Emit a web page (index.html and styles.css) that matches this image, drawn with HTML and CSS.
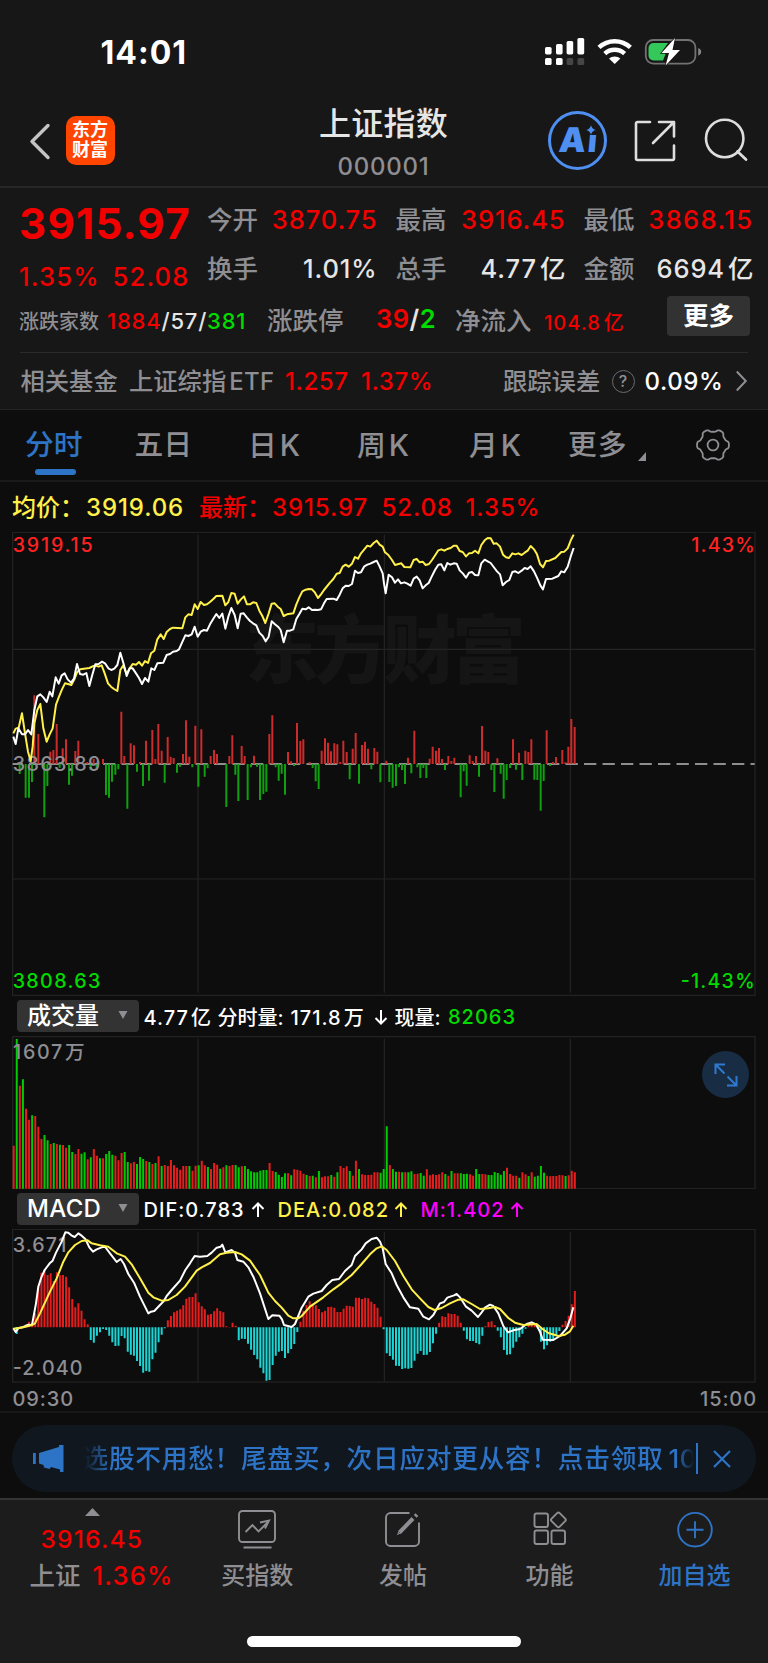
FILE: index.html
```html
<!DOCTYPE html>
<html lang="zh-CN">
<head>
<meta charset="utf-8">
<title>上证指数 000001</title>
<link rel="stylesheet" href="styles.css">
</head>
<body>
<div class="app">
  <div class="statusbar">
    <div class="clock">14:01</div>
    <svg class="status-icons" width="160" height="32" viewBox="0 0 160 32">
      <g fill="#fff">
        <rect x="1" y="13" width="6.6" height="7.4" rx="1.6"/><rect x="12" y="10" width="6.6" height="10.4" rx="1.6"/><rect x="22.6" y="7" width="6.6" height="13.4" rx="1.6"/><rect x="33.4" y="4" width="6.8" height="16.4" rx="1.6"/>
        <rect x="1" y="24" width="6.6" height="7" rx="1.6"/><rect x="12" y="24" width="6.6" height="7" rx="1.6"/>
      </g>
      <g fill="#464646"><rect x="22.6" y="24" width="6.6" height="7" rx="1.6"/><rect x="33.4" y="24" width="6.8" height="7" rx="1.6"/></g>
      <g fill="none" stroke="#fff" stroke-width="4.4"><path d="M55 13.4a23 23 0 0 1 31.4 0"/><path d="M60.8 19.6a14.6 14.6 0 0 1 19.8 0"/></g>
      <path d="M65 24.6a8.6 8.6 0 0 1 11.4 0L70.7 30z" fill="#fff"/>
      <rect x="101.800" y="6" width="49.600" height="23.600" rx="7.500" fill="none" stroke="#727272" stroke-width="1.800"/>
      <path d="M154.200 14c4 1.200 4 6.500 0 7.600z" fill="#858585"/>
      <path d="M109.500 9H124l-6 8.500h4.500L119 26.500h-9.500a5 5 0 0 1-5-5V14a5 5 0 0 1 5-5z" fill="#34c759"/>
      <path d="M131 4 117.500 19h7.500l-3.400 12.500L136 16h-7.500z" fill="#fff" stroke="#171717" stroke-width="1.500" paint-order="stroke"/>
    </svg>
  </div>

  <header class="header">
    <svg class="back" width="24" height="40" viewBox="0 0 24 40"><path d="M20 4.500 4 20.500l16 16" fill="none" stroke="#c4c4c4" stroke-width="3.400" stroke-linecap="round" stroke-linejoin="round"/></svg>
    <div class="logo"><span>东方</span><span>财富</span></div>
    <div class="title"><h1>上证指数</h1><p>000001</p></div>
    <div class="ai"><span class="ai-text">A<i>ı</i></span>
      <svg class="spark" width="10" height="10" viewBox="0 0 10 10"><path d="M5 0q.8 4.200 5 5-4.200.8-5 5-.8-4.200-5-5 4.200-.8 5-5z" fill="#4f8ff2"/></svg>
    </div>
    <svg class="share" width="44" height="44" viewBox="0 0 44 44"><path d="M17 3H4.500A1.500 1.500 0 0 0 3 4.500v35A1.500 1.500 0 0 0 4.500 41h35a1.500 1.500 0 0 0 1.500-1.500V26.500M26 3h15v14.500M40.500 3.500 20 24" fill="none" stroke="#dedede" stroke-width="2.600" stroke-linecap="round" stroke-linejoin="round"/></svg>
    <svg class="search" width="46" height="46" viewBox="0 0 46 46"><circle cx="21.700" cy="20.500" r="18.700" fill="none" stroke="#dedede" stroke-width="2.600"/><path d="m34.500 33.500 8.500 8" stroke="#dedede" stroke-width="2.800" stroke-linecap="round"/></svg>
  </header>

  <section class="quote">
    <div class="quote-top">
      <div class="price">
        <div class="last">3915.97</div>
        <div class="delta"><span>1.35%</span><span>52.08</span></div>
      </div>
      <div class="stats">
        <div class="stats-row">
          <span class="label">今开</span><span class="value up">3870.75</span>
          <span class="label">最高</span><span class="value up">3916.45</span>
          <span class="label">最低</span><span class="value up">3868.15</span>
        </div>
        <div class="stats-row">
          <span class="label">换手</span><span class="value">1.01%</span>
          <span class="label">总手</span><span class="value">4.77<b>亿</b></span>
          <span class="label">金额</span><span class="value">6694<b>亿</b></span>
        </div>
      </div>
    </div>
    <div class="breadth">
      <span class="label small">涨跌家数</span>
      <span class="counts"><em class="up">1884</em>/57/<em class="down">381</em></span>
      <span class="label">涨跌停</span>
      <span class="limits"><em class="up">39</em>/<em class="down">2</em></span>
      <span class="label">净流入</span>
      <span class="inflow up">104.8<b>亿</b></span>
      <button class="more">更多</button>
    </div>
    <div class="fund">
      <span class="cjk">相关基金</span>
      <span class="cjk">上证综指<b>ETF</b></span>
      <span class="num up">1.257</span>
      <span class="num up">1.37%</span>
      <span class="cjk">跟踪误差</span>
      <i class="help">?</i>
      <span class="num white">0.09%</span>
      <svg width="14" height="24" viewBox="0 0 14 24"><path d="m.8 2.500 9 9.500-9 9.500" fill="none" stroke="#8e8e93" stroke-width="2"/></svg>
    </div>
  </section>

  <nav class="tabs">
    <a class="active">分时</a><a>五日</a><a>日<b>K</b></a><a>周<b>K</b></a><a>月<b>K</b></a><a class="tab-more">更多<svg class="corner" width="8" height="9" viewBox="0 0 8 9"><path d="M8 0v9H0z" fill="#8e8e93"/></svg></a>
    <svg class="gear" width="34" height="34" viewBox="-17 -17 34 34" fill="none" stroke="#8e8e93" stroke-width="1.800"><path id="gear"/><circle r="5.400"/></svg>
  </nav>

  <div class="legend">
    <span class="avg">均价：</span><span class="num avg">3919.06</span><span class="up">最新：</span><span class="num up">3915.97</span><span class="num up">52.08</span><span class="num up">1.35%</span>
  </div>

  <svg class="chart" width="768" height="464" viewBox="0 396 2304 1392">
    <text class="watermark" x="735" y="831" textLength="842">东方财富</text>
    <g class="grid"><rect x="38" y="397" width="2227" height="1389"/><path d="M594 404V1778M1153 404V1778M1711 404V1778M38 748H2264M38 1437H2264"/></g>
    <path d="M38 1092H2264" stroke="#8e8e8e" stroke-width="6" stroke-dasharray="37 18.500" stroke-dashoffset="6.500"/>
    <path class="rise-soft" id="diff-up"/><path class="fall-soft" id="diff-down"/>
    <text class="axis" x="38" y="1112" textLength="263">3863.89</text>
    <polyline id="avg-line" class="line yellow" points="40,1000 47,986 56,983 66,940 75,1000 84,1055 92,1083 98,1040 103,970 112,930 121,912 130,985 140,1025 149,1003 158,985 168,914 177,890 186,868 195,850 204,852 214,855 223,838 232,815 241,808 268,804 278,799 287,797 296,800 305,796 314,820 324,850 333,860 342,867 352,873 361,810 370,796 380,822 389,805 398,792 408,794 417,786 426,797 435,783 444,789 453,760 463,752 472,718 482,703 491,717 500,696 510,687 519,683 547,685 556,652 565,643 575,645 584,613 593,627 602,606 612,615 621,613 630,606 640,597 649,588 667,587 676,616 685,606 694,579 704,581 713,611 722,599 732,589 741,613 750,613 759,607 769,609 778,632 787,648 796,669 806,640 815,611 824,610 833,620 842,627 851,648 861,643 880,640 889,613 898,592 907,574 917,569 926,567 936,568 945,578 954,594 963,583 972,570 990,548 1000,537 1010,521 1019,519 1028,500 1037,494 1046,500 1056,491 1065,471 1074,476 1083,460 1093,448 1102,437 1111,440 1121,429 1130,422 1139,434 1148,440 1155,457 1165,465 1176,480 1185,495 1204,490 1213,501 1231,502 1241,480 1250,477 1259,487 1268,485 1277,495 1287,492 1296,480 1306,465 1315,451 1324,448 1333,452 1342,447 1352,444 1361,437 1370,437 1379,453 1388,456 1398,469 1407,460 1416,459 1425,452 1435,460 1444,435 1454,421 1463,414 1472,415 1481,431 1490,430 1500,440 1509,464 1518,472 1527,474 1537,460 1546,463 1555,460 1565,465 1574,458 1583,452 1592,438 1602,448 1611,463 1620,492 1629,502 1638,483 1648,482 1666,474 1684,456 1693,455 1703,445 1712,422 1721,404"/>
    <polyline id="price-line" class="line white" points="40,1010 47,1032 55,985 66,1003 75,1003 84,990 94,1003 103,930 112,889 121,883 130,892 140,906 149,875 157,889 167,832 176,851 185,826 194,820 203,838 213,848 222,836 231,792 240,822 250,824 259,819 268,858 277,824 286,793 296,792 306,785 316,791 325,805 334,810 343,806 352,795 361,758 371,792 380,828 389,805 398,805 408,820 417,834 426,852 435,834 445,845 454,805 463,810 472,790 490,788 500,765 510,762 519,755 530,753 537,748 546,728 556,706 565,708 575,703 584,680 593,710 602,695 612,690 621,692 630,673 640,656 649,642 658,654 667,641 676,686 685,650 694,624 704,645 713,685 722,641 731,640 741,653 750,663 759,670 769,676 778,698 788,708 797,724 806,710 815,664 824,672 834,680 842,690 851,727 861,692 870,692 880,688 889,657 898,642 907,626 917,628 926,622 936,630 945,629 954,630 963,628 972,610 980,597 1000,596 1010,600 1019,584 1028,565 1037,557 1046,558 1056,552 1065,512 1074,519 1083,517 1093,499 1102,494 1111,491 1121,486 1130,482 1139,500 1148,520 1152,550 1157,580 1166,524 1176,532 1185,548 1194,538 1203,550 1213,547 1222,551 1232,557 1241,536 1250,530 1259,541 1268,565 1277,556 1286,549 1295,530 1305,510 1315,494 1324,493 1333,511 1342,489 1351,494 1361,490 1370,491 1379,511 1389,521 1398,533 1407,518 1416,516 1425,525 1435,526 1444,490 1454,479 1463,484 1472,489 1481,501 1491,514 1500,523 1508,556 1518,546 1528,540 1537,516 1546,514 1555,519 1565,512 1574,504 1583,507 1592,499 1602,514 1612,535 1621,556 1629,568 1638,537 1657,536 1675,528 1684,514 1693,517 1703,500 1712,470 1721,444"/>
    <text class="axis rise" x="38" y="457" textLength="240">3919.15</text>
    <text class="axis rise" x="2074" y="457" textLength="190">1.43%</text>
    <text class="axis fall" x="38" y="1765" textLength="263">3808.63</text>
    <text class="axis fall" x="2042" y="1765" textLength="222">-1.43%</text>
  </svg>

  <div class="indicator volume-bar">
    <button class="picker">成交量<svg width="10" height="8" viewBox="0 0 10 8"><path d="M.5 0h9L5 8z" fill="#8e8e93"/></svg></button>
    <span class="num">4.77<b>亿</b></span><span>分时量:</span><span class="num">171.8<b>万</b></span><svg class="arrow" width="14" height="16" viewBox="0 0 14 16"><path d="M7 1v13.500M1.500 9 7 14.500 12.500 9"/></svg><span>现量:</span><span class="num down">82063</span>
  </div>
  <div class="chart-wrap">
    <svg class="chart" width="768" height="153" viewBox="0 168 2304 459">
      <g class="grid"><rect x="38" y="170" width="2227" height="456"/><path d="M594 176V626M1153 176V626M1711 176V626"/></g>
      <path class="rise" id="vol-up"/><path class="fall" id="vol-down"/>
      <text class="axis" x="39" y="236" textLength="148">1607</text><text class="axis" x="195" y="236">万</text>
    </svg>
    <button class="expand"><svg width="24" height="24" viewBox="0 0 24 24" fill="none" stroke="#2e7ad0" stroke-width="2"><path d="M11 1.500H1.500V11M1.500 1.500 10.500 10.500M13 22.500h9.500V13M22.500 22.500 13.500 13.500"/></svg></button>
  </div>

  <div class="indicator macd-bar">
    <button class="picker">MACD<svg width="10" height="8" viewBox="0 0 10 8"><path d="M.5 0h9L5 8z" fill="#8e8e93"/></svg></button>
    <span class="num">DIF:0.783</span><svg class="arrow" width="14" height="16" viewBox="0 0 14 16"><path d="M7 15V1.500M1.500 7 7 1.500 12.500 7"/></svg>
    <span class="num avg">DEA:0.082</span><svg class="arrow avg" width="14" height="16" viewBox="0 0 14 16"><path d="M7 15V1.500M1.500 7 7 1.500 12.500 7"/></svg>
    <span class="num magenta">M:1.402</span><svg class="arrow magenta" width="14" height="16" viewBox="0 0 14 16"><path d="M7 15V1.500M1.500 7 7 1.500 12.500 7"/></svg>
  </div>
  <svg class="chart" width="768" height="154" viewBox="0 117 2304 462">
    <g class="grid"><rect x="38" y="118" width="2227" height="458"/><path d="M594 125V574M1153 125V574M1711 125V574"/></g>
    <text class="axis" x="38" y="185" textLength="161">3.671</text>
    <text class="axis" x="38" y="554" textLength="209">-2.040</text>
    <path class="rise" id="macd-up"/><path class="aqua" id="macd-down"/>
    <polyline class="line white" points="40,415 47,426 55,415 70,411 85,404 96,405 108,340 115,290 124,262 134,240 149,220 158,212 168,188 185,155 196,127 205,128 214,136 224,141 235,130 245,137 256,147 268,172 279,185 290,178 305,172 315,170 330,190 350,216 362,207 372,222 385,252 403,280 420,320 445,370 453,365 463,363 480,345 490,335 500,318 515,300 540,272 556,240 570,220 584,198 600,200 622,198 635,188 650,173 662,170 667,164 676,187 695,180 705,188 712,210 730,215 745,232 760,260 780,310 805,387 817,376 838,377 846,388 852,405 875,411 885,402 905,353 925,320 940,311 965,303 980,285 997,270 1017,267 1035,243 1055,225 1065,198 1085,178 1097,160 1115,147 1130,143 1140,155 1148,175 1157,222 1175,250 1190,285 1210,322 1230,352 1255,356 1270,380 1287,388 1300,375 1320,340 1332,336 1342,323 1362,316 1370,312 1380,322 1398,350 1415,362 1434,381 1445,367 1455,353 1470,344 1480,348 1495,370 1510,408 1524,427 1540,421 1560,417 1580,402 1595,397 1608,403 1620,425 1628,449 1660,450 1680,438 1700,415 1711,385 1720,352"/>
    <polyline class="line yellow" points="40,416 70,412 97,405 105,400 120,370 150,305 170,265 190,215 205,187 225,165 245,153 263,151 275,160 300,166 325,170 350,190 375,200 395,223 420,265 445,308 460,322 485,332 505,330 530,315 555,290 590,242 605,232 630,219 660,193 680,188 705,186 725,193 750,212 780,255 805,308 825,333 845,353 865,377 880,385 895,385 905,378 930,350 970,322 1000,298 1025,280 1055,255 1085,222 1110,193 1130,175 1145,169 1160,180 1185,213 1210,258 1235,298 1260,325 1285,351 1303,360 1325,354 1350,340 1375,329 1390,328 1415,342 1440,357 1465,355 1485,351 1500,357 1525,384 1545,398 1570,405 1610,402 1625,415 1645,429 1675,438 1695,434 1710,424 1720,407"/>
  </svg>
  <div class="times"><span>09:30</span><span>15:00</span></div>

  <div class="promo-area">
    <div class="promo">
      <svg class="horn" width="32" height="28" viewBox="0 0 32 28" fill="#2e74c6"><path d="M0 8h2.800v11H0zM6 8 26 2V0h4.500v27H27v-2.500l-9-2.500-1.500 2-5.500-1.500-.5-2.500L6 18.500z"/></svg>
      <div class="promo-text">选股不用愁！尾盘买，次日应对更从容！点击领取<b>10</b></div>
      <i class="divider"></i>
      <svg class="close" width="18" height="18" viewBox="0 0 18 18"><path d="m1 1 16 16M17 1 1 17" stroke="#2e74c6" stroke-width="2.200"/></svg>
    </div>
  </div>

  <footer class="bottom">
    <div class="bottom-nav">
      <div class="mini">
        <svg width="15" height="8" viewBox="0 0 15 8"><path d="M7.500 0 15 8H0z" fill="#8e8e93"/></svg>
        <div class="mini-price">3916.45</div>
        <div class="mini-row"><span>上证</span><em>1.36%</em></div>
      </div>
      <a><svg width="40" height="40" viewBox="0 0 40 40"><rect x="2" y="2" width="36" height="31" rx="3.500"/><path d="M6.500 38.500h28M8.500 23 15.500 16l6 6.500 9.500-9.500M23 13.500l9-2-4 8"/></svg>买指数</a>
      <a><svg width="40" height="40" viewBox="0 0 40 40"><path d="M26.500 4H7.500A4.500 4.500 0 0 0 3 8.500v24A4.500 4.500 0 0 0 7.500 37h24a4.500 4.500 0 0 0 4.500-4.500V13.500"/><path d="M32.200 7.300l1.700-1.700M30 9.500 16.500 23.500" stroke-width="4"/><path d="m14.500 25.500 2-4 2 2z" stroke-width="1"/></svg>发帖</a>
      <a class="features"><svg width="40" height="40" viewBox="0 0 40 40"><rect x="4.500" y="4.500" width="13.500" height="13.500" rx="2"/><rect x="4.500" y="21.500" width="13.500" height="13.500" rx="2"/><rect x="21.500" y="21.500" width="13.500" height="13.500" rx="2"/><rect x="22.700" y="5.200" width="11.400" height="11.400" rx="1.800" transform="rotate(45 28.400 10.900)"/></svg>功能</a>
      <a class="add"><svg width="40" height="40" viewBox="0 0 40 40"><circle cx="20" cy="20.700" r="16.800"/><path d="M11.500 20.700h17M20 12.200v17"/></svg>加自选</a>
    </div>
    <div class="home"></div>
  </footer>
</div>
<script src="charts.js"></script>
</body>
</html>
```
FILE: styles.css
```css
* { box-sizing: border-box; }
body { margin: 0; background: #0d0d0d; color: #e6e6e6; font-family: Inter, "Noto Sans CJK SC", sans-serif; font-weight: 500; }
h1, p { margin: 0; font-weight: 500; }
em, i { font-style: normal; }
b { font-weight: inherit; }
button { border: 0; padding: 0; font: inherit; color: inherit; }
svg { display: block; flex: none; }
span, a, div { white-space: nowrap; }
.app { width: 768px; height: 1663px; overflow: hidden; }
.up { color: #f20000; }
.down { color: #00dc00; }
.white { color: #fff; }
.avg { color: #fff04a; }
.magenta { color: #ff00ff; }

.statusbar { height: 96px; background: #171717; display: flex; justify-content: space-between; padding: 34px 64px 0 100.500px; }
.clock { font-size: 32px; line-height: 37px; font-weight: 700; color: #fff; letter-spacing: 1px; }

.header { height: 92px; background: #171717; border-bottom: 2px solid #272727; display: grid; grid-template-columns: 65.500px 49px 178.500px 182px 73px 85px 69.500px 1fr; }
.back { margin: 24.500px 0 0 28px; }
.logo { grid-column: 2; margin-top: 19.500px; width: 49px; height: 49px; border-radius: 10px; background: #ff4500; display: flex; flex-direction: column; align-items: center; justify-content: center; font-size: 18px; line-height: 20px; font-weight: 700; color: #fff; }
.title { grid-column: 4; text-align: center; margin-left: -1px; }
.title h1 { font-size: 32px; line-height: 40px; margin-top: 7.500px; color: #e6e6e6; letter-spacing: .2px; }
.title p { font-size: 24px; line-height: 30px; margin-top: 8px; color: #8e8e93; letter-spacing: .8px; }
.ai { grid-column: 6; margin: 15px 0 0 0; width: 59px; height: 59px; border: 3px solid #4f8ff2; border-radius: 50%; color: #4f8ff2; position: relative; }
.ai-text { position: absolute; left: 8px; top: 8px; font-size: 34px; line-height: 36px; font-weight: 900; letter-spacing: -1px; transform: skewX(-5deg); }
.ai-text i { margin-left: 3px; font-size: 31px; }
.spark { position: absolute; left: 34.500px; top: 11px; }
.share { grid-column: 7; margin: 23px 0 0 0; }
.search { grid-column: 8; margin: 22px 0 0 .5px; }

.quote { height: 222px; background: #171717; border-bottom: 1px solid #242424; }
.quote-top { display: flex; height: 108px; }
.price { width: 207px; padding-left: 19px; color: #f20000; }
.last { font-size: 42px; line-height: 50px; margin-top: 10.500px; font-weight: 700; letter-spacing: 1.300px; }
.delta { display: grid; grid-template-columns: 93.500px 80px; font-size: 25.500px; line-height: 32px; margin-top: 12px; font-weight: 500; letter-spacing: 1.200px; }
.stats { margin-top: 6.500px; font-size: 25.500px; line-height: 49px; font-weight: 550; }
.stats-row { display: grid; grid-template-columns: 50px 120.500px 68px 120px 68px 120px; }
.stats-row .label:nth-child(n+2) { padding-left: 18px; }
.stats-row .value { text-align: right; letter-spacing: .9px; }
.stats-row:first-child .value:last-child { letter-spacing: 1.400px; }
.stats b, .inflow b { margin-left: 3px; letter-spacing: 0; font-weight: 500; }
.label { color: #8e8e93; font-weight: 500; font-size: 25.500px; }
.breadth { display: grid; grid-template-columns: 88px 160px 108px 80px 89px 123px 83px; padding: 0 0 12px 19px; height: 56px; align-items: center; }
.small { font-size: 20px; padding-top: 5px; }
.counts { font-size: 22px; font-weight: 550; padding-top: 5px; letter-spacing: .8px; }
.limits { font-size: 25.500px; font-weight: 600; padding-left: 1px; letter-spacing: .5px; }
.inflow { font-size: 20px; font-weight: 500; padding-top: 7px; letter-spacing: 1px; }
.more { width: 83px; height: 40px; border-radius: 4px; background: #323232; color: #fff; font-size: 25.500px; line-height: 40px; font-weight: 700; margin-top: -5px; }
.fund { margin: 0 20px; border-top: 1px solid #2a2a2a; height: 57px; display: grid; grid-template-columns: 108.500px 156px 76px 142px 108.500px 33px 91px 14px; align-items: center; font-size: 24.300px; color: #8e8e93; padding-left: .5px; }
.fund .cjk { margin-top: -4px; }
.fund .num { font-weight: 550; font-size: 24px; letter-spacing: .6px; }
.fund b { font-size: 24px; font-weight: 500; margin-left: 3px; letter-spacing: .3px; }
.help { width: 23px; height: 23px; border: 1.500px solid #6c6c70; border-radius: 50%; font-size: 16px; line-height: 20px; text-align: center; }

.tabs { height: 72px; border-bottom: 2px solid #1a1a1a; display: grid; grid-template-columns: 109.500px 113.500px 109px 112px 99px 128px 1fr; padding-left: 25px; color: #8e8e93; font-size: 28.800px; line-height: 70px; }
.tabs a { position: relative; }
.tabs b { font-size: 29.500px; font-weight: 500; margin-left: 3px; }
.tabs .active { color: #2e74c6; }
.tabs .tab-more { letter-spacing: 1px; }
.active::after { content: ""; position: absolute; left: 9.500px; bottom: 6px; width: 41px; height: 6px; border-radius: 3px; background: #2e74c6; }
.corner { position: absolute; left: 69.500px; top: 41.500px; }
.gear { margin-top: 17.500px; }

.legend { height: 50px; display: grid; grid-template-columns: 74px 113px 73px 109.500px 84px 90px; padding-left: 12px; font-size: 24px; line-height: 51px; }
.legend .num { font-weight: 550; letter-spacing: .9px; }

.chart { overflow: hidden; }
.grid { fill: none; stroke: #242424; stroke-width: 3.500; }
.watermark { font-size: 222px; font-weight: 900; fill: #151515; }
.line { fill: none; stroke-width: 6; stroke-linejoin: round; }
.line.yellow { stroke: #fff04a; }
.line.white { stroke: #fff; }
.axis { font-size: 59px; fill: #8e8e93; font-weight: 500; }
.rise { fill: #ff2222; }
.fall { fill: #00dc00; }
.rise-soft { fill: #cc2b2b; }
.fall-soft { fill: #0ea00e; }
.aqua { fill: #1cd5d5; }
path.rise { fill: #e51d1d; }
path.fall { fill: #00cc00; }
.chart-wrap { position: relative; }
.expand { position: absolute; right: 19px; top: 15px; width: 47px; height: 47px; border-radius: 50%; background: #182c43; display: grid; place-items: center; }

.indicator { height: 40px; display: grid; align-items: center; padding: 1px 0 0 17px; font-size: 20px; color: #fff; }
.volume-bar { grid-template-columns: 126.500px 74px 73px 83px 21px 53.500px 70px; }
.macd-bar { grid-template-columns: 126.500px 107px 27px 116px 27px 89.500px 20px; }
.indicator .num { font-weight: 500; letter-spacing: 1px; }
.indicator .num b { margin-left: 2px; }
.picker { width: 122px; height: 32px; margin-top: -1.500px; background: #333; border-radius: 4px; font-size: 24px; line-height: 33px; display: flex; align-items: center; justify-content: space-between; padding: 0 11px 0 10px; }
.macd-bar .picker { font-weight: 500; letter-spacing: .3px; }
.picker svg { margin-top: -2px; }
.arrow { fill: none; stroke: currentColor; stroke-width: 2; }

.times { height: 28px; padding: 3px 11px 0 12.500px; display: flex; justify-content: space-between; font-size: 20px; line-height: 27px; font-weight: 500; letter-spacing: .9px; color: #8e8e93; }
.promo-area { border-top: 2px solid #181818; height: 87px; padding: 12px; }
.promo { height: 67px; border-radius: 34px; background: #10171f; color: #2e74c6; display: grid; grid-template-columns: 51px 612px 17px 18px; align-items: center; padding-left: 20.500px; }
.promo-text { overflow: hidden; font-size: 25.700px; line-height: 40px; letter-spacing: .72px; text-indent: -1px; -webkit-mask-image: linear-gradient(90deg, transparent 0, #000 28px, #000 592px, transparent 610px); mask-image: linear-gradient(90deg, transparent 0, #000 28px, #000 592px, transparent 610px); }
.promo-text b { margin-left: 5px; }
.divider { width: 2px; height: 31px; background: #2e74c6; }

.bottom { border-top: 2px solid #343434; background: #1c1c1c; height: 166px; color: #8e8e93; }
.bottom-nav { display: grid; grid-template-columns: 184.400px repeat(4, 145.750px); height: 136px; }
.bottom-nav a { display: flex; flex-direction: column; align-items: center; font-size: 24px; line-height: 32px; padding-top: 9px; gap: 11px; }
.bottom-nav a svg { fill: none; stroke: #8e8e93; stroke-width: 1.900; }
.bottom-nav .features { padding-left: 1.500px; }
.bottom-nav .add { color: #2e74c6; }
.bottom-nav .add svg { stroke: #2e74c6; }
.mini { color: #f20000; font-weight: 550; }
.mini svg { margin: 8px 0 0 85px; }
.mini-price { font-size: 24.500px; line-height: 32px; margin: 7px 0 0 40.500px; letter-spacing: 1.200px; }
.mini-row { display: grid; grid-template-columns: 63px 90px; padding-left: 29.500px; font-size: 25.500px; line-height: 32px; margin-top: 5px; letter-spacing: 1.200px; }
.mini-row span { color: #8e8e93; font-weight: 500; letter-spacing: 0; }
.home { width: 274px; height: 11px; border-radius: 6px; background: #fff; margin: 0 auto; }
```
FILE: charts.js
```js
// Bars are [x, y] pairs or, for indexed series, one level per minute.
const bar = (x, y, base, w = 6) => `M${x - w / 2} ${Math.min(y, base)}h${w}V${Math.max(y, base)}h${-w}z`;
const set = (id, d) => document.getElementById(id).setAttribute('d', d);
const pairs = s => s.trim().split(/\s+/).map(p => p.split(',').map(Number));

const diffUp = '103,886 115,1002 151,1055 160,1050 170,972 188,1045 198,1018 226,1053 235,1022 262,1086 281,1076 309,1077 364,935 373,1068 392,1030 402,1036 420,1086 438,1022 457,990 466,1077 475,972 485,1052 503,1011 512,1070 521,1074 549,1062 558,961 568,1070 586,977 604,988 632,1068 642,1050 651,1062 688,1068 697,1006 725,1038 734,1068 762,1067 808,1002 817,946 864,1056 873,1084 891,969 901,1023 910,1018 929,1086 965,1052 975,1015 984,1028 993,1054 1003,1030 1012,1033 1021,1086 1030,1022 1040,1056 1058,1046 1067,999 1086,1035 1095,1025 1104,1046 1123,1044 1132,1055 1159,1082 1224,1073 1243,992 1289,1076 1298,1040 1308,1052 1317,1044 1326,1077 1345,1068 1354,1083 1363,1073 1409,1066 1418,1083 1428,1068 1446,978 1456,1052 1465,1056 1492,1075 1539,1018 1557,1058 1576,1052 1585,1056 1594,1018 1640,991 1659,1086 1668,1071 1687,1050 1696,1087 1705,1040 1714,957 1724,981';
const diffDown = '59,1122 77,1193 87,1193 96,1146 133,1252 142,1158 179,1103 207,1154 216,1127 272,1110 290,1110 318,1185 327,1193 336,1145 346,1124 355,1108 382,1226 411,1115 429,1158 447,1142 494,1148 531,1118 540,1100 577,1102 595,1160 614,1130 623,1105 679,1221 706,1124 715,1203 743,1200 753,1102 771,1100 780,1200 790,1182 799,1175 827,1102 836,1142 845,1121 855,1184 882,1098 938,1104 947,1144 956,1167 1049,1138 1077,1151 1114,1108 1141,1147 1168,1146 1178,1163 1188,1158 1197,1102 1206,1110 1215,1152 1234,1120 1252,1102 1261,1134 1270,1104 1279,1134 1335,1110 1382,1192 1391,1114 1400,1157 1437,1130 1474,1110 1483,1176 1502,1121 1511,1196 1520,1140 1530,1104 1548,1109 1567,1140 1603,1139 1612,1140 1622,1232 1631,1143 1650,1098';
set('diff-up', pairs(diffUp).map(([x, y]) => bar(x, y, 1092)).join(''));
set('diff-down', pairs(diffDown).map(([x, y]) => bar(x, y, 1092)).join(''));

const volume = 'r497 g177 r317 g298 r386 r419 g406 r408 r440 r477 g465 g481 r492 g489 r492 g494 r495 r503 g495 g516 r522 r507 g521 g517 r538 g532 r507 r527 g535 r535 g522 g513 g524 r527 r541 r519 g516 g546 r550 r546 g552 g531 g537 r543 g546 r552 g549 r529 g558 r555 r558 r540 r556 r563 r569 r558 r558 g558 r572 r557 g556 r542 r556 g561 r567 r549 r554 g566 r562 g556 r558 r555 g555 g562 r559 g558 g567 g574 g577 g577 g572 g570 g570 r549 r573 g576 g584 g591 g580 r580 g586 r568 r569 r572 r581 g585 r588 g587 r592 g573 r592 r589 r589 g585 r590 g577 r558 r564 r559 g573 r587 r542 g567 r583 r585 r585 r584 r577 r577 g578 g567 g439 r555 g567 g575 r575 g577 r577 g577 g574 r582 r581 g579 g587 r568 r586 r583 r585 r583 r577 g582 r587 g573 r580 r580 g580 g582 g581 r583 r587 g567 g582 r582 r583 g585 g585 g576 g579 g584 g573 r563 r582 r587 r587 g593 r577 r583 g588 r577 g590 g587 g558 g578 r587 r589 r588 r588 r585 r586 g588 r586 r572 r577';
let up = '', down = '';
volume.split(' ').forEach((v, i) => {
  const d = bar(41 + 9.25 * i, +v.slice(1), 626);
  if (v[0] === 'r') up += d; else down += d;
});
set('vol-up', up);
set('vol-down', down);

const macd = [412,432,412,408,404,395,400,370,290,248,240,255,250,273,247,256,255,260,292,327,352,340,362,388,403,450,458,437,427,417,420,437,457,468,467,438,445,485,494,497,513,528,548,543,545,508,488,457,434,415,391,378,367,362,358,346,326,321,321,310,337,349,358,374,372,364,355,363,367,409,411,398,407,451,446,447,461,479,495,508,533,550,572,570,525,497,485,483,504,490,477,462,426,395,362,345,334,344,346,357,367,362,351,350,353,366,366,356,347,348,350,323,323,327,323,325,335,342,353,380,418,490,498,509,527,528,537,535,536,534,512,491,483,495,494,486,460,431,398,379,381,370,372,372,377,398,422,448,453,453,459,463,437,409,396,394,405,422,442,480,494,493,473,455,442,431,416,405,400,402,415,455,478,466,455,447,437,423,404,393,377,343,303];
up = ''; down = '';
macd.forEach((y, i) => {
  const d = bar(41 + 9.25 * i, y, 412);
  if (y < 412) up += d; else down += d;
});
set('macd-up', up);
set('macd-down', down);

// Cog outline with six soft lobes.
let cog = '';
for (let a = 0; a < 360; a += 4) {
  const t = a * Math.PI / 180;
  const r = 14.6 + 1.4 * Math.tanh(2.2 * Math.cos(6 * t)) ;
  cog += `${a ? 'L' : 'M'}${(r * Math.cos(t)).toFixed(2)} ${(r * Math.sin(t)).toFixed(2)}`;
}
set('gear', cog + 'z');
```
